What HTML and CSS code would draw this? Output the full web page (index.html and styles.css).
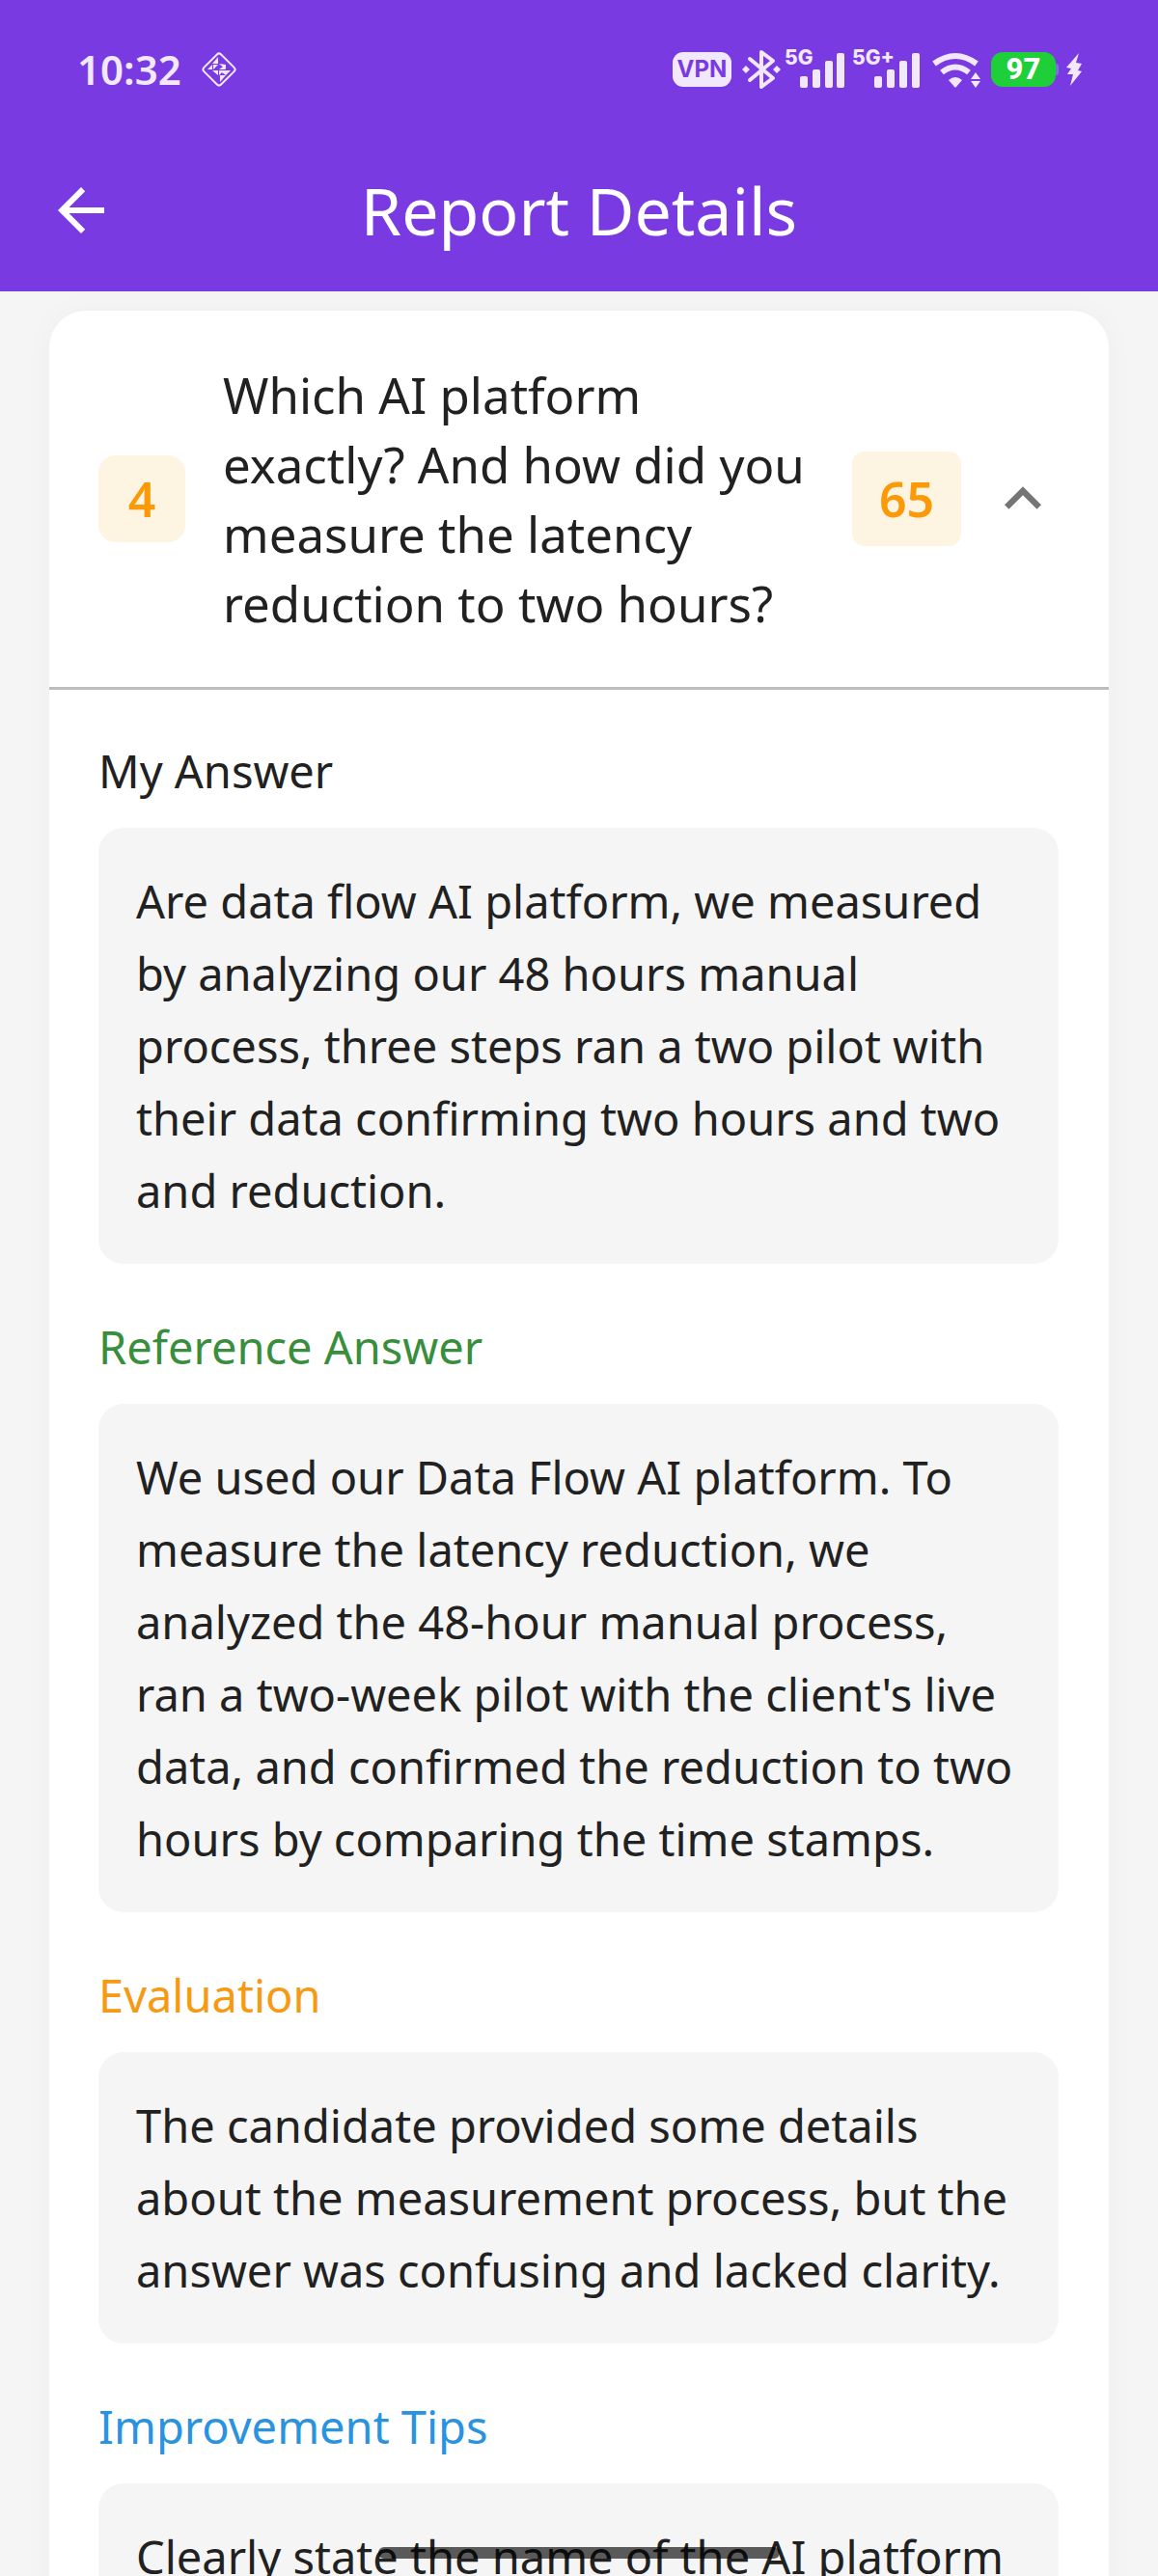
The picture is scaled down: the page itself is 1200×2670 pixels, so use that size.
FILE: index.html
```html
<!DOCTYPE html>
<html lang="en">
<head>
<meta charset="utf-8">
<meta name="viewport" content="width=device-width, initial-scale=1">
<title>Report Details</title>
<link rel="stylesheet" href="styles.css">
</head>
<body>
<div class="app">
  <header class="header">
    <div class="status">
      <div class="status-left">
        <span class="clock">10:32</span>
        <svg width="38" height="38" viewBox="0 0 38 38" fill="none" aria-hidden="true">
          <rect x="6.5" y="6.5" width="25" height="25" rx="3" stroke="currentColor" stroke-width="2" transform="rotate(45 19 19)"/>
          <path fill="currentColor" d="M18 6v7h-6zM7 19l5-5v5zM13 14h5l-5 5zM19 13l7 1v5zM26 14l-1 5h-6zM12 20h6v5zM19 20h12l-5 5zM20 32v-7h6zM19 20h5l-5 5z"/>
        </svg>
      </div>
      <div class="status-right">
        <span class="vpn">VPN</span>
        <svg width="47" height="44" viewBox="0 0 47 44" aria-hidden="true">
          <path d="M15 11l24 20-12 9V4l12 9-24 20" fill="none" stroke="currentColor" stroke-width="4" stroke-linejoin="round" stroke-linecap="round"/>
          <path fill="currentColor" d="M11 18l4 4-4 4-4-4zM43 18l4 4-4 4-4-4z"/>
        </svg>
        <svg class="signal" width="62" height="48" viewBox="0 -2 62 48" fill="currentColor" role="img" aria-label="5G signal">
          <text x="0" y="17">5G</text>
          <rect x="16" y="29" width="8" height="12" rx="2"/><rect x="29" y="22" width="8" height="19" rx="2"/><rect x="42" y="13" width="8" height="28" rx="2"/><rect x="54" y="5" width="8" height="36" rx="2"/>
        </svg>
        <svg class="signal" width="75" height="48" viewBox="0 -2 75 48" fill="currentColor" role="img" aria-label="5G+ signal">
          <text x="4" y="17">5G+</text>
          <rect x="27" y="29" width="8" height="12" rx="2"/><rect x="40" y="22" width="8" height="19" rx="2"/><rect x="53" y="13" width="8" height="28" rx="2"/><rect x="66" y="5" width="8" height="36" rx="2"/>
        </svg>
        <svg width="61" height="44" viewBox="0 0 61 44" aria-hidden="true">
          <g fill="none" stroke="currentColor" stroke-width="6"><path d="M10 16Q32 0 54 16"/><path d="M18 25Q32 14 46 25"/></g>
          <path fill="currentColor" d="M25 33Q32 27 39 33L33 40Q32 41 31 40zM53 25l5 7H48zM48 34h10l-5 7z"/>
        </svg>
        <span class="battery">97</span>
        <svg width="16" height="36" viewBox="0 0 16 36" fill="currentColor" aria-hidden="true"><path d="M13 1L0 16l5 1-4 6h6L4 35 16 20l-4-1 4-7-6-1z"/></svg>
      </div>
    </div>
    <div class="appbar">
      <button class="back" type="button" aria-label="Back">
        <svg width="72" height="72" viewBox="0 0 24 24" fill="currentColor"><path d="M20 11H7.830l5.590-5.590L12 4l-8 8 8 8 1.410-1.410L7.830 13H20z"/></svg>
      </button>
      <h1 class="title">Report Details</h1>
    </div>
  </header>

  <main class="content">
    <article class="card">
      <div class="question">
        <span class="number">4</span>
        <h2 class="question-text">Which AI platform exactly? And how did you measure the latency reduction to two hours?</h2>
        <span class="score">65</span>
        <button class="toggle" type="button" aria-label="Collapse" aria-expanded="true">
          <svg width="76" height="76" viewBox="0 0 24 24" fill="currentColor"><path d="M12 8l-6 6 1.410 1.410L12 10.830l4.590 4.580L18 14z"/></svg>
        </button>
      </div>
      <div class="sections">
        <section>
          <h3 class="label">My Answer</h3>
          <p class="box">Are data flow AI platform, we measured by analyzing our 48 hours manual process, three steps ran a two pilot with their data confirming two hours and two and reduction.</p>
        </section>
        <section>
          <h3 class="label label-reference">Reference Answer</h3>
          <p class="box">We used our Data Flow AI platform. To measure the latency reduction, we analyzed the 48-hour manual process, ran a two-week pilot with the client's live data, and confirmed the reduction to two hours by comparing the time stamps.</p>
        </section>
        <section>
          <h3 class="label label-evaluation">Evaluation</h3>
          <p class="box">The candidate provided some details about the measurement process, but the answer was confusing and lacked clarity.</p>
        </section>
        <section>
          <h3 class="label label-tips">Improvement Tips</h3>
          <p class="box">Clearly state the name of the AI platform</p>
        </section>
      </div>
    </article>
  </main>
  <div class="home-indicator"></div>
</div>
</body>
</html>
```
FILE: styles.css
```css
* {
  box-sizing: border-box;
}

body,
h1,
h2,
h3,
p {
  margin: 0;
}

body {
  background: #f5f5f5;
  color: #212121;
  font-family: "Noto Sans", sans-serif;
}

button {
  display: flex;
  padding: 0;
  border: 0;
  background: none;
  color: inherit;
}

svg {
  display: block;
  flex: none;
}

.app {
  display: flex;
  flex-direction: column;
  height: 100vh;
}

.header {
  flex: none;
  background: #7a3ae2;
  color: #fff;
}

.status {
  display: flex;
  align-items: center;
  justify-content: space-between;
  height: 134px;
  padding: 10px 79px 0 80px;
  color: #f1e8fc;
}

.status-left {
  display: flex;
  align-items: center;
  gap: 20px;
}

.clock {
  font-size: 42px;
  font-weight: 600;
  line-height: 44px;
}

.status-right {
  display: flex;
  align-items: center;
  gap: 4px;
}

.vpn {
  width: 61px;
  border-radius: 11px;
  background: #f1e8fc;
  color: #7a3ae2;
  font-family: Inter, sans-serif;
  font-size: 24px;
  font-weight: 700;
  line-height: 36px;
  text-align: center;
}

.signal text {
  font-family: Inter, sans-serif;
  font-size: 21px;
  font-weight: 800;
}

.battery {
  position: relative;
  width: 67px;
  margin: 0 7px 0 4px;
  border-radius: 12px;
  background: #1fcf3a;
  color: #fff;
  font-family: Roboto, sans-serif;
  font-size: 31px;
  font-weight: 800;
  line-height: 36px;
  text-align: center;
}

.battery::after {
  content: "";
  position: absolute;
  top: 12px;
  left: 100%;
  width: 3px;
  height: 12px;
  border-radius: 0 3px 3px 0;
  background: #6f7ccb;
}

.appbar {
  display: grid;
  grid-template-columns: 72px 1fr 72px;
  align-items: center;
  height: 168px;
  padding: 0 48px;
}

.title {
  font-size: 68px;
  font-weight: 400;
  line-height: 96px;
  text-align: center;
}

.content {
  flex: 1;
  min-height: 0;
  padding: 20px 51px 0;
  overflow-y: auto;
  scrollbar-width: none;
}

.card {
  border-radius: 38px 38px 0 0;
  background: #fff;
  box-shadow: 0 0 32px rgba(0, 0, 0, 0.03);
}

.question {
  display: flex;
  align-items: center;
  padding: 51px;
  border-bottom: 3px solid #bdbdbd;
}

.number,
.score {
  flex: none;
  background: #fdf4e2;
  color: #fb9906;
  font-size: 50px;
  font-weight: 600;
  text-align: center;
}

.number {
  width: 90px;
  border-radius: 18px;
  line-height: 90px;
}

.score {
  width: 113px;
  border-radius: 13px;
  line-height: 98px;
}

.question-text {
  flex: 1;
  margin: 0 38px 0 39px;
  font-size: 51px;
  font-weight: 400;
  line-height: 72px;
}

.toggle {
  margin-left: 26px;
  color: #757575;
}

.sections {
  display: flex;
  flex-direction: column;
  gap: 55px;
  padding: 53px 52px 0 51px;
}

.label {
  margin-bottom: 27px;
  font-size: 47px;
  font-weight: 400;
  line-height: 63px;
}

.label-reference {
  color: #388e3c;
}

.label-evaluation {
  color: #f59a12;
}

.label-tips {
  color: #2a93e0;
}

.box {
  padding: 39px 39px 38px;
  border-radius: 26px;
  background: #f5f5f5;
  font-size: 47px;
  line-height: 75px;
}

.home-indicator {
  position: fixed;
  bottom: 18px;
  left: 50%;
  width: 416px;
  height: 12px;
  margin-left: -208px;
  border-radius: 6px;
  background: rgba(0, 0, 0, 0.63);
}
```
